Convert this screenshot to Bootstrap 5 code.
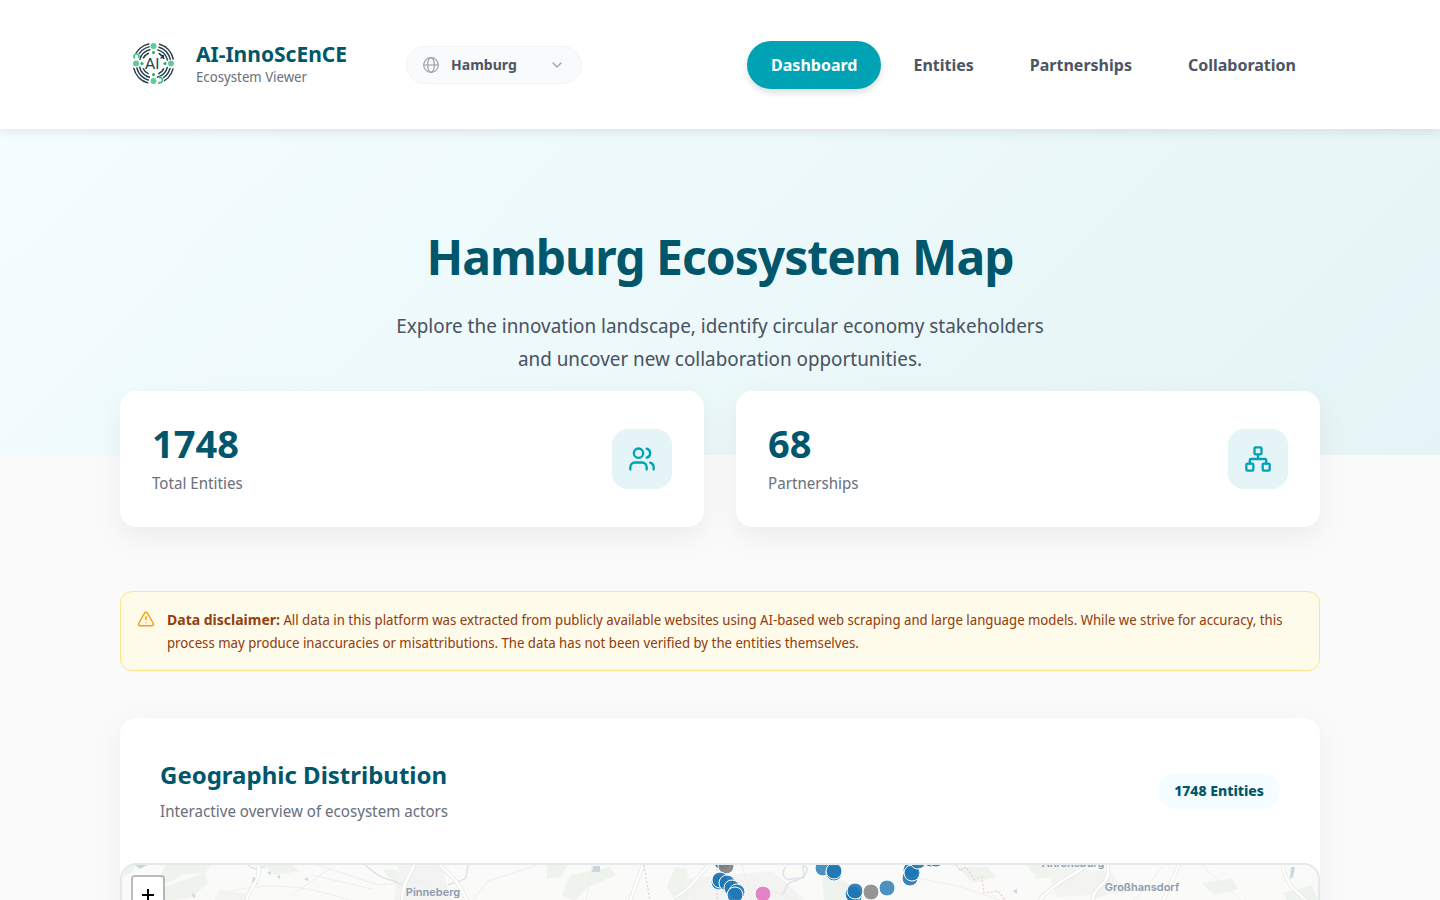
<!DOCTYPE html>
<html lang="en">
<head>
<meta charset="utf-8">
<meta name="viewport" content="width=device-width, initial-scale=1">
<title>AI-InnoScEnCE Ecosystem Viewer</title>
<link href="https://cdn.jsdelivr.net/npm/bootstrap@5.3.0/dist/css/bootstrap.min.css" rel="stylesheet">
<style>
  :root { --brand: #00a3b4; --brand-dark: #00566b; --ink: #4b5563; --muted: #6b7280; --heading-font: "Noto Sans", sans-serif; }
  body { font-family: "Noto Sans Display", "Noto Sans", sans-serif; background: #fafafa; color: var(--ink); font-size: 16px; line-height: 24px; }
  .page-width { max-width: 1248px; padding-left: 24px; padding-right: 24px; }
  .brand-name, .main-nav, .hero h1, .stat-value, .geo-title, .count-pill, .disclaimer strong { font-family: var(--heading-font); font-weight: 700; }
  .site-header { position: relative; z-index: 2; padding: 41px 0 40px; box-shadow: 0 1px 12px rgba(0,0,0,.12); }
  .brand-name { font-size: 21px; line-height: 24px; color: var(--brand-dark); }
  .brand-sub { font-size: 14px; line-height: 22px; color: var(--muted); }
  .city-picker { width: 176px; margin-left: 59px; }
  .city-picker svg { position: absolute; left: 17px; top: 11px; pointer-events: none; }
  .city-picker .form-select { height: 38px; padding: 0 40px 0 44px; font: 700 14px/20px var(--heading-font); color: var(--ink); background-color: #f9fafb; border-color: #f3f4f6; background-position: right 16px center; background-size: 16px 16px;
    background-image: url("data:image/svg+xml,%3Csvg xmlns='http://www.w3.org/2000/svg' viewBox='0 0 24 24' fill='none' stroke='%239ca3af' stroke-width='2' stroke-linecap='round' stroke-linejoin='round'%3E%3Cpath d='m6 9 6 6 6-6'/%3E%3C/svg%3E"); }
  .main-nav .nav-link { padding: 12px 24px; color: var(--ink); border-radius: 24px; }
  .main-nav .nav-link.active { background: var(--brand); color: #fff; box-shadow: 0 4px 6px rgba(0,0,0,.12); }
  .hero { background: linear-gradient(135deg, #f4fdff 0%, #e5f4f6 100%); padding: 96px 0 80px; }
  .hero h1 { font-size: 48px; line-height: 64px; color: var(--brand-dark); letter-spacing: -1px; margin-bottom: 20px; }
  .hero p { font-size: 20px; line-height: 33px; max-width: 672px; }
  .stat-row { margin-top: -64px; margin-bottom: 64px; }
  .panel { background: #fff; border-radius: 16px; box-shadow: 0 10px 30px rgba(0,0,0,.06); }
  .stat-card { padding: 32px; }
  .stat-value { font-size: 38px; line-height: 40px; margin-bottom: 8px; color: var(--brand-dark); }
  .stat-icon { width: 60px; height: 60px; border-radius: 16px; background: #e5f4f7; color: var(--brand); }
  .soft-text { color: var(--muted); }
  .disclaimer { background: #fffbeb; border: 1px solid #fde68a; border-radius: 12px; color: #92400e; font-size: 14px; line-height: 23px; padding: 16px; gap: 12px; margin-bottom: 47px; }
  .disclaimer svg { margin-top: 2px; }
  .geo-head { padding: 40px; }
  .geo-title { font-size: 24px; line-height: 34px; color: var(--brand-dark); margin-bottom: 7px; }
  .count-pill { background: #f4fdff; color: var(--brand-dark); font-size: 14px; line-height: 20px; font-weight: 800; padding: 8px 16px; border-radius: 18px; }
  .map-frame { height: 500px; border: 2px solid #e5e9eb; border-radius: 16px; overflow: hidden; background: #fafaf8; }
  .map-frame > svg { display: block; }
  .zoom-box { position: absolute; left: 9px; top: 10px; border: 2px solid rgba(0,0,0,.25); border-radius: 4px; }
  .zoom-box .btn { display: block; width: 30px; height: 36px; padding: 0; background: #fff; color: #000; border-radius: 2px; border: 0; line-height: 0; }
  .zoom-box .btn + .btn { border-top: 1px solid #ccc; }
</style>
</head>
<body>
<header class="site-header bg-white">
  <div class="container-fluid page-width d-flex align-items-center">
    <a href="#" class="d-flex align-items-center text-decoration-none">
      <svg width="68" height="48" viewBox="0 0 68 48" aria-hidden="true">
        <g transform="translate(33.500 22.500)" fill="none" stroke="#243f4b" stroke-width="1.500">
          <circle r="20.300" stroke-dasharray="21.900 10" stroke-dashoffset="-5"/>
          <circle r="17.300" stroke-dasharray="18.200 9" stroke-dashoffset="-4.500"/>
          <circle r="14.400" stroke-dasharray="15.600 7" stroke-dashoffset="-3.500"/>
          <circle r="11.500" stroke-dasharray="8 10.060" stroke-dashoffset="-5"/>
          <g fill="#5fc9a1" stroke="none"><circle cy="-17.500" r="3"/><circle cy="17.500" r="3"/><circle cx="-17.500" r="3"/><circle cx="17.500" r="3"/></g>
          <g fill="#2ba85b" stroke="none"><circle cy="-11" r="1.500"/><circle cy="11" r="1.500"/><circle cx="-11.500" r="1.500"/><circle cx="11.500" r="1.500"/></g>
          <g fill="#fff" stroke="none"><circle cx="-17" cy="-7" r="3.600"/><circle cx="7" cy="16.500" r="3.600"/></g>
          <g stroke="#35b777" stroke-width="1.500"><path d="M-18.500-5a2.500 2.500 0 1 1 3.500-.5"/><path d="M5 14.500a2.500 2.500 0 1 1 0 4"/></g>
          <path d="M7-5 10-8M7-8h3v3" stroke-width="1.200"/>
        </g>
        <text x="25" y="28" font-family="Lato, sans-serif" font-size="15" fill="#243f4b">AI</text>
      </svg>
      <span class="d-flex flex-column ms-2"><span class="brand-name">AI-InnoScEnCE</span><span class="brand-sub">Ecosystem Viewer</span></span>
    </a>
    <div class="city-picker position-relative">
      <select id="city" class="form-select rounded-pill" aria-label="City"><option>Hamburg</option></select>
      <svg width="16" height="16" viewBox="0 0 24 24" fill="none" stroke="#9ca3af" stroke-width="1.800" aria-hidden="true"><circle cx="12" cy="12" r="11"/><ellipse cx="12" cy="12" rx="5" ry="11"/><path d="M1 12h22"/></svg>
    </div>
    <nav class="main-nav nav ms-auto gap-2 flex-nowrap">
      <a class="nav-link active" href="#" aria-current="page">Dashboard</a>
      <a class="nav-link" href="#">Entities</a>
      <a class="nav-link" href="#">Partnerships</a>
      <a class="nav-link" href="#">Collaboration</a>
    </nav>
  </div>
</header>
<main>
  <section class="hero text-center">
    <div class="container-fluid page-width">
      <h1>Hamburg Ecosystem Map</h1>
      <p class="mx-auto mb-0">Explore the innovation landscape, identify circular economy stakeholders and uncover new collaboration opportunities.</p>
    </div>
  </section>
  <div class="container-fluid page-width">
    <div class="stat-row row row-cols-2 position-relative">
      <div class="col pe-3"><div class="panel stat-card d-flex justify-content-between align-items-center"><div><div class="stat-value">1748</div><div class="soft-text">Total Entities</div></div>
        <div class="stat-icon d-flex align-items-center justify-content-center"><svg width="28" height="28" viewBox="0 0 24 24" fill="none" stroke="currentColor" stroke-width="2" stroke-linecap="round" stroke-linejoin="round" aria-hidden="true"><path d="M16 21v-2a4 4 0 0 0-4-4H6a4 4 0 0 0-4 4v2"/><circle cx="9" cy="7" r="4"/><path d="M22 21v-2a4 4 0 0 0-3-3.870M16 3.130a4 4 0 0 1 0 7.750"/></svg></div></div></div>
      <div class="col ps-3"><div class="panel stat-card d-flex justify-content-between align-items-center"><div><div class="stat-value">68</div><div class="soft-text">Partnerships</div></div>
        <div class="stat-icon d-flex align-items-center justify-content-center"><svg width="28" height="28" viewBox="0 0 24 24" fill="none" stroke="currentColor" stroke-width="2" stroke-linecap="round" stroke-linejoin="round" aria-hidden="true"><rect x="16" y="16" width="6" height="6" rx="1"/><rect x="2" y="16" width="6" height="6" rx="1"/><rect x="9" y="2" width="6" height="6" rx="1"/><path d="M5 16v-3a1 1 0 0 1 1-1h12a1 1 0 0 1 1 1v3M12 12V8"/></svg></div></div></div>
    </div>
    <div class="disclaimer d-flex" role="note">
      <svg class="flex-shrink-0" width="18" height="18" viewBox="0 0 24 24" fill="none" stroke="#f59e0b" stroke-width="2" stroke-linecap="round" stroke-linejoin="round" aria-hidden="true"><path d="m21.730 18-8-14a2 2 0 0 0-3.480 0l-8 14A2 2 0 0 0 4 21h16a2 2 0 0 0 1.730-3M12 9v4M12 17h.010"/></svg>
      <div><strong>Data disclaimer:</strong> All data in this platform was extracted from publicly available websites using AI-based web scraping and large language models. While we strive for accuracy, this process may produce inaccuracies or misattributions. The data has not been verified by the entities themselves.</div>
    </div>
    <section class="panel">
      <div class="geo-head d-flex justify-content-between align-items-center">
        <div><h2 class="geo-title">Geographic Distribution</h2><div class="soft-text">Interactive overview of ecosystem actors</div></div>
        <span class="count-pill">1748 Entities</span>
      </div>
      <div class="map-frame position-relative">
        <svg width="100%" height="100%" viewBox="0 0 1196 496" preserveAspectRatio="xMidYMin slice" role="img" aria-label="Map of ecosystem actors around Hamburg">
          <!-- woodland -->
          <g fill="#eef3ee">
            <path d="M0 0h14l-4 8-10 4zM44 0h45l-6 8-22 1-12 8-14 3zM60 16l22-8 4 10-16 14-22 4-20-4 14-10zM140 0h30l8 6-24 4zM260 4l26 2 22 14 8 16-20-4-24-14zM425 0h20l-6 12-14 2zM545 22l8-20 12 2 2 32h-14zM448 10l40-8 6 8-28 12-14 14-12-6zM700 12l24 4 8 18-30 2zM835 2h30l10 10-24 6zM905 0h50l-8 10-32 4zM960 20l32-6 8 10-28 10zM1080 18l30-4 6 10-24 6zM1160 28l30-8 6 16h-30z"/>
            <path d="M40 90l80-20 40 40-60 50-70-20zM440 120l90-40 30 50-80 50zM860 80l90 10 20 60-100 20z"/>
          </g>
          <g fill="#f3f3f2"><path d="M276 0h44l10 40h-58zM560 14l90-8 40 34H570zM925 4l64 2 16 22-70 4zM98 24l30 6-6 10H90z"/></g>
          <!-- lakes -->
          <g fill="#ccd6dc"><path d="M13 0h12l-7 4zM131 12l5 3-1 5-5-3zM145 8l4-2v4zM155 12l3-2v4zM182 14l4-2v4zM471 1h7v6h-8zM70 28l4 3-3 2zM1169 2h4l-2 10-3 2zM891 26l4-2v5z"/></g>
          <g fill="none" stroke="#dce3e8" stroke-width="1.500"><path d="M126 0c8 8 12 0 17 2M243 0c10 8 14 12 22 14s12 4 14 6M326 20c10-4 16-4 18-8l2-12M664 2c-6 6-2 14 6 12s14 2 12-6-2-8 2-6-2 12-12 14-6 8-12 14"/></g>
          <!-- minor roads -->
          <g fill="none" stroke="#eeeeeb" stroke-width="1"><path d="M170 30l40-28M196 0l60 20 50-4M350 36l16-20 50-16M110 26c40-10 80-4 120 10M470 0l-6 36M600 10l80 26M620 0l10 36M780 10l60 12 40 14M1040 2l-20 26-10 8M1080 0l10 10 30 26M250 24l-60-14"/></g>
          <!-- main roads -->
          <g fill="none" stroke="#e6e6e3" stroke-width="4"><path d="M136 0c4 14-8 22-12 36M292 0c-6 14-12 20-12 36M318 0c12 12 20 18 27 36M521 0l-13 36M587 0c-14 14-18 24-34 32M967 0c-20 12-40 22-50 36M986 0v10c-2 10-14 12-16 26M1057 0l-16 36M1161 0c2 18 12 26 24 36"/><path d="M124 36l-30 460M345 36l100 460M508 36L400 496M1041 36L900 496"/></g>
          <g fill="none" stroke="#fff" stroke-width="2.500"><path d="M136 0c4 14-8 22-12 36M292 0c-6 14-12 20-12 36M318 0c12 12 20 18 27 36M521 0l-13 36M587 0c-14 14-18 24-34 32M967 0c-20 12-40 22-50 36M986 0v10c-2 10-14 12-16 26M1057 0l-16 36M1161 0c2 18 12 26 24 36"/><path d="M124 36l-30 460M345 36l100 460M508 36L400 496M1041 36L900 496"/></g>
          <g fill="none" stroke="#efc9cd" stroke-width="1.200" stroke-dasharray="2 2"><path d="M522 0l6 36M595 0v36M834 0l4 6 6-4 8 12 8-2 2 16 14-2 8 10"/></g>
          <g fill="#8b9bad" font-family="Inter, sans-serif" font-size="11" font-weight="600" text-anchor="middle"><text x="311" y="31">Pinneberg</text><text x="951" y="2">Ahrensburg</text><text x="1020" y="26">Großhansdorf</text></g>
          <!-- entity markers -->
          <g fill="#1f77b4" fill-opacity=".9" stroke="#fff" stroke-width="1">
            <circle cx="600" cy="-3" r="8"/><circle cx="604" cy="1" r="8" fill="#7f7f7f"/>
            <circle cx="597" cy="17" r="8"/><circle cx="598" cy="15" r="8"/><circle cx="605" cy="18" r="8"/><circle cx="610" cy="23" r="8"/><circle cx="615" cy="27" r="8"/><circle cx="613" cy="30" r="8"/>
            <circle cx="641" cy="29" r="8" fill="#e377c2"/>
            <circle cx="701" cy="3" r="8" fill-opacity=".8"/><circle cx="712" cy="8" r="8"/><circle cx="712" cy="6" r="8"/>
            <circle cx="732" cy="32" r="8"/><circle cx="731" cy="29" r="8"/><circle cx="733" cy="26" r="8"/><circle cx="749" cy="27" r="8" fill="#8a8a8a"/><circle cx="765" cy="23" r="8" fill-opacity=".8"/>
            <circle cx="788" cy="13" r="8"/><circle cx="789" cy="5" r="8"/><circle cx="790" cy="8" r="8"/><circle cx="796" cy="-4" r="8"/><circle cx="809" cy="-6" r="8"/><circle cx="814" cy="-6" r="8"/>
          </g>
        </svg>
        <div class="zoom-box">
          <button type="button" class="btn" aria-label="Zoom in"><svg width="14" height="14" viewBox="0 0 14 14" aria-hidden="true"><path d="M7 1v12M1 7h12" stroke="#000" stroke-width="2"/></svg></button>
          <button type="button" class="btn" aria-label="Zoom out"><svg width="14" height="14" viewBox="0 0 14 14" aria-hidden="true"><path d="M1 7h12" stroke="#000" stroke-width="2"/></svg></button>
        </div>
      </div>
    </section>
  </div>
</main>
<script src="https://cdn.jsdelivr.net/npm/bootstrap@5.3.0/dist/js/bootstrap.bundle.min.js"></script>
</body>
</html>
